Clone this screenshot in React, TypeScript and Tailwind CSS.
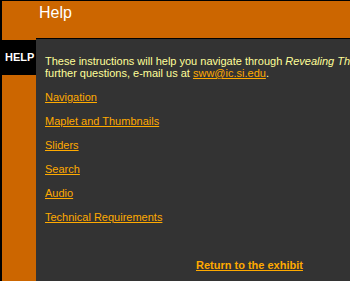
export default function App() {
  const links = [
    "Navigation",
    "Maplet and Thumbnails",
    "Sliders",
    "Search",
    "Audio",
    "Technical Requirements",
  ];

  return (
    <div
      className="flex h-[281px] w-[350px] flex-col overflow-hidden border-l-2 border-t border-black bg-[#cc6600]"
      style={{ fontFamily: '"Liberation Sans", Arial, sans-serif' }}
    >
      {/* header */}
      <div className="h-[37px] shrink-0 pl-[37px] pt-[2px] text-[16px] leading-[20px] text-white">
        Help
      </div>

      <div className="flex flex-1">
        {/* left rail */}
        <div className="w-[34px] shrink-0 pt-[2px]">
          <div className="flex h-[35px] items-center overflow-hidden bg-black pl-[3px] text-[11px] font-bold text-white">
            HELP
          </div>
        </div>

        {/* content panel */}
        <div className="flex-1 border-t border-black bg-[#333333] pl-[9px] pt-[16px] text-[11px] leading-[12px]">
          <p className="whitespace-nowrap text-[#ffff99]">
            These instructions will help you navigate through{" "}
            <i>Revealing Things</i>. If you have any
            <br />
            further questions, e-mail us at{" "}
            <a href="#" className="text-[#ffaa00] underline">
              sww@ic.si.edu
            </a>
            .
          </p>

          <ul className="mt-[12px] flex flex-col gap-[11px]">
            {links.map((l) => (
              <li key={l} className="leading-[13px]">
                <a href="#" className="text-[#ffaa00] underline">
                  {l}
                </a>
              </li>
            ))}
          </ul>

          <div className="mt-[35px] pl-[151px]">
            <a href="#" className="font-bold text-[#ffaa00] underline">
              Return to the exhibit
            </a>
          </div>
        </div>
      </div>
    </div>
  );
}
